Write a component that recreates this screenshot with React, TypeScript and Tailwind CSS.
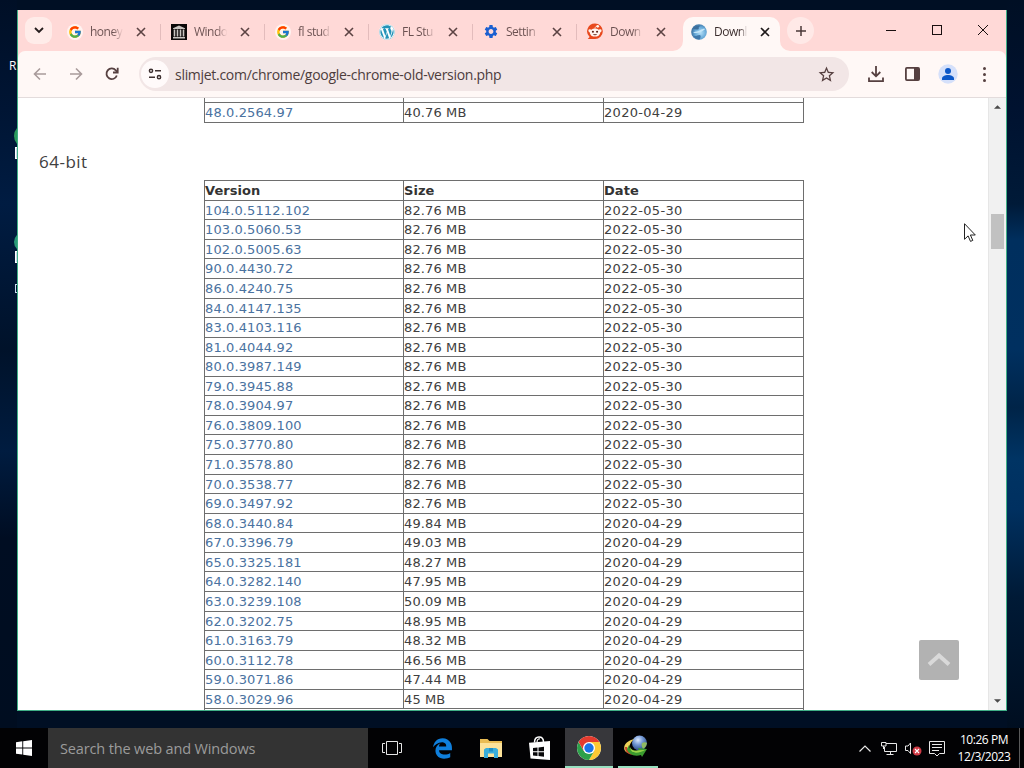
import React from 'react'
import { FcGoogle } from 'react-icons/fc'
import { FaWordpress, FaEdgeLegacy } from 'react-icons/fa6'
import { MdSettings, MdStarOutline } from 'react-icons/md'

type Release = [version: string, size: string, date: string];

const releases: Release[] = [
  ['104.0.5112.102', '82.76 MB', '2022-05-30'],
  ['103.0.5060.53', '82.76 MB', '2022-05-30'],
  ['102.0.5005.63', '82.76 MB', '2022-05-30'],
  ['90.0.4430.72', '82.76 MB', '2022-05-30'],
  ['86.0.4240.75', '82.76 MB', '2022-05-30'],
  ['84.0.4147.135', '82.76 MB', '2022-05-30'],
  ['83.0.4103.116', '82.76 MB', '2022-05-30'],
  ['81.0.4044.92', '82.76 MB', '2022-05-30'],
  ['80.0.3987.149', '82.76 MB', '2022-05-30'],
  ['79.0.3945.88', '82.76 MB', '2022-05-30'],
  ['78.0.3904.97', '82.76 MB', '2022-05-30'],
  ['76.0.3809.100', '82.76 MB', '2022-05-30'],
  ['75.0.3770.80', '82.76 MB', '2022-05-30'],
  ['71.0.3578.80', '82.76 MB', '2022-05-30'],
  ['70.0.3538.77', '82.76 MB', '2022-05-30'],
  ['69.0.3497.92', '82.76 MB', '2022-05-30'],
  ['68.0.3440.84', '49.84 MB', '2020-04-29'],
  ['67.0.3396.79', '49.03 MB', '2020-04-29'],
  ['65.0.3325.181', '48.27 MB', '2020-04-29'],
  ['64.0.3282.140', '47.95 MB', '2020-04-29'],
  ['63.0.3239.108', '50.09 MB', '2020-04-29'],
  ['62.0.3202.75', '48.95 MB', '2020-04-29'],
  ['61.0.3163.79', '48.32 MB', '2020-04-29'],
  ['60.0.3112.78', '46.56 MB', '2020-04-29'],
  ['59.0.3071.86', '47.44 MB', '2020-04-29'],
  ['58.0.3029.96', '45 MB', '2020-04-29'],
]

function ArchiveIcon() {
  return (
    <svg viewBox="0 0 16 16" className="h-4 w-4">
      <rect width="16" height="16" fill="#0c0808" />
      <path d="M2 4.2 8 1.6l6 2.6v.8H2z M2 13h12v1.6H2z" fill="#c9c4c0" />
      <path d="M3.500 5.500v7M6.500 5.500v7M9.500 5.500v7M12.500 5.500v7" stroke="#c9c4c0" strokeWidth="1.6" />
    </svg>
  )
}

function RedditIcon() {
  return (
    <svg viewBox="0 0 17 17" className="h-[17px] w-[17px]">
      <path d="M8.5 0a8.3 8.3 0 1 1 0 16.6H.8l2-2.2A8.3 8.3 0 0 1 8.5 0z" fill="#e8481c" />
      <ellipse cx="8.5" cy="9.6" rx="5.6" ry="4.3" fill="#fff4ee" />
      <circle cx="3" cy="7.7" r="1.5" fill="#fff4ee" />
      <circle cx="14" cy="7.7" r="1.5" fill="#fff4ee" />
      <circle cx="11.4" cy="3" r="1.4" fill="#fff4ee" />
      <path d="M8.5 5.4c0-1.6.8-2.4 2.4-2.4" stroke="#fff4ee" strokeWidth=".8" fill="none" />
      <circle cx="6.3" cy="8.8" r="1.1" fill="#5a1f12" />
      <circle cx="10.7" cy="8.8" r="1.1" fill="#5a1f12" />
      <path d="M6.2 11.4c1.2 1.3 3.4 1.3 4.6 0z" fill="#5a1f12" />
    </svg>
  )
}

function SlimjetIcon() {
  return (
    <svg viewBox="0 0 16 16" className="h-4 w-4">
      <defs>
        <radialGradient id="globe" cx=".6" cy=".55" r=".6">
          <stop offset="0" stopColor="#b4dff7" />
          <stop offset=".6" stopColor="#67a9d8" />
          <stop offset="1" stopColor="#386f9f" />
        </radialGradient>
      </defs>
      <circle cx="8" cy="8" r="7.8" fill="url(#globe)" />
      <path d="M1.500 4.500C4 1.500 7 1 9.500 1.600 8 3 7 4 8 5 6 6 4 5.500 1.500 4.500z" fill="#3c6f9c" />
      <path d="M2 8.500c3-1 5-1 7-2.200 2-1.300 4-1.800 5.500-1.300-2 1-3 2.500-5 3.300S4.500 9.500 2 8.500z" fill="#c4e6f9" />
      <path d="M2.500 12c3 .5 4-1 6-1s1 3 0 4.500c-2 .2-4.500-1-6-3.500z" fill="#3f78aa" />
    </svg>
  )
}

function ChromeIcon() {
  return (
    <svg viewBox="0 0 24 24" className="h-6 w-6">
      <circle cx="12" cy="12" r="12" fill="#fff" />
      <path d="M12 12V6h10.390A12 12 0 0 1 12 24l5.200-9z" fill="#fcc934" />
      <path d="M17.200 15 12 24A12 12 0 0 1 1.610 6L6.800 15 12 17z" fill="#2da04a" />
      <path d="M1.610 6 6.800 15 12 12 12 6H22.390A12 12 0 0 0 1.610 6z" fill="#e33b2e" />
      <circle cx="12" cy="12" r="6" fill="#fff" />
      <circle cx="12" cy="12" r="4.700" fill="#1a73e8" />
    </svg>
  )
}

function DownloadManagerIcon() {
  return (
    <svg viewBox="0 0 24 24" className="h-6 w-6">
      <defs>
        <radialGradient id="ball" cx=".4" cy=".3" r=".75">
          <stop offset="0" stopColor="#dbe9ff" />
          <stop offset=".45" stopColor="#6f95d2" />
          <stop offset="1" stopColor="#22407c" />
        </radialGradient>
      </defs>
      <circle cx="15.500" cy="8" r="7.500" fill="url(#ball)" />
      <path d="M18 8c2-1 4-1 5 0-.5 3-2 5-4 6-1-2-2-4-1-6z" fill="#8fba62" />
      <path d="M10 4C3 6-1 10 .5 15c2 4 7 4 11 3C7 18 4 15 5.500 10.500 6.500 8 8 6 10 4z" fill="#f0d35a" />
      <path d="M1 12c0 6 5 9 10 7-4 0-7-2-8-7z" fill="#c7452c" />
      <path d="M5 10c0 5 4 7 10 5l-1-2 9 1-5 8-1-2c-7 2-13-1-14-6z" fill="#3b9b2f" />
      <path d="M6 12c1 3 5 4.500 9 3.300l6-.3c-3 2-10 4-13 1.500-1.500-1-2-3-2-4.500z" fill="#9bd64a" />
    </svg>
  )
}

const tabs = [
  { title: 'honey', icon: <FcGoogle className="h-3.5 w-3.5" />, plate: true },
  { title: 'Windo', icon: <ArchiveIcon /> },
  { title: 'fl stud', icon: <FcGoogle className="h-3.5 w-3.5" />, plate: true },
  { title: 'FL Stu', icon: <FaWordpress className="h-4 w-4 rounded-full bg-white text-[#2493b8]" /> },
  { title: 'Settin', icon: <MdSettings className="h-[17px] w-[17px] text-[#1a5fd0]" /> },
  { title: 'Down', icon: <RedditIcon /> },
  { title: 'Downl', icon: <SlimjetIcon />, active: true },
]

function CloseGlyph({ active }: { active?: boolean }) {
  return (
    <svg viewBox="0 0 8 8" className="h-2 w-2 shrink-0 overflow-visible">
      <path d="M0 0l8 8M8 0 0 8" stroke={active ? '#1f1a1a' : '#5c4343'} strokeWidth="1.6" />
    </svg>
  )
}

function TabStrip() {
  return (
    <div className="flex h-[41px] shrink-0">
      <div className="ml-[7px] mt-[7px] flex h-[27px] w-[27px] items-center justify-center rounded-[9px] bg-[#ffece9]">
        <svg viewBox="0 0 8 5" className="h-[5px] w-2 overflow-visible">
          <path d="M0 0l4 4 4-4" fill="none" stroke="#241c1c" strokeWidth="1.8" />
        </svg>
      </div>
      <div className="ml-[7px] flex pt-[7px]">
        {tabs.map((tab, i) => (
          <div
            key={i}
            className={
              tab.active
                ? 'relative flex h-[34px] w-[97px] items-center rounded-t-[10px] bg-[#fff8f6] pb-[5px] pl-2'
                : 'relative flex h-[34px] w-[104px] items-center pb-[5px] pl-2'
            }
          >
            {tab.active && (
              <>
                <svg viewBox="0 0 10 10" className="absolute -left-[10px] bottom-0 h-[10px] w-[10px]">
                  <path d="M10 0v10H0A10 10 0 0 0 10 0z" fill="#fff8f6" />
                </svg>
                <svg viewBox="0 0 10 10" className="absolute -right-[10px] bottom-0 h-[10px] w-[10px]">
                  <path d="M0 0v10h10A10 10 0 0 1 0 0z" fill="#fff8f6" />
                </svg>
              </>
            )}
            <span
              className={
                tab.plate
                  ? 'flex h-4 w-4 shrink-0 items-center justify-center rounded-full bg-[#fff3f1]'
                  : 'flex h-4 w-4 shrink-0 items-center justify-center'
              }
            >
              {tab.icon}
            </span>
            <span
              className={
                tab.active
                  ? 'ml-[7px] w-[35px] whitespace-nowrap bg-linear-to-r from-[#3a2c2c] from-75% to-transparent to-95% bg-clip-text text-[12px] tracking-[-0.5px] text-transparent'
                  : 'ml-[7px] w-[35px] whitespace-nowrap bg-linear-to-r from-[#6a5050] from-65% to-transparent to-95% bg-clip-text text-[12px] tracking-[-0.5px] text-transparent'
              }
            >
              {tab.title}
            </span>
            <span className="ml-3 flex">
              <CloseGlyph active={tab.active} />
            </span>
            {i < 5 && <span className="ml-[15px] h-4 w-px bg-[#e3bcbc]" />}
          </div>
        ))}
      </div>
      <div className="ml-[7px] mt-[7px] flex h-[27px] w-[27px] items-center justify-center rounded-full bg-[#ffe9e7]">
        <svg viewBox="0 0 10 10" className="h-[10px] w-[10px]">
          <path d="M5 0v10M0 5h10" stroke="#4a3838" strokeWidth="1.5" />
        </svg>
      </div>
      <div className="ml-auto flex h-10 items-center text-[#1a0f0f]">
        <span className="flex w-[46px] justify-center">
          <span className="h-px w-[10px] bg-current" />
        </span>
        <span className="flex w-[46px] justify-center">
          <span className="h-[10px] w-[10px] border border-current" />
        </span>
        <span className="flex w-[46px] justify-center">
          <svg viewBox="0 0 10 10" className="h-[10px] w-[10px]">
            <path d="M0 0l10 10M10 0 0 10" stroke="currentColor" />
          </svg>
        </span>
      </div>
    </div>
  )
}

function Toolbar() {
  return (
    <div className="flex h-[47px] shrink-0 items-center rounded-t-[7px] border-b border-[#e3dcdc] bg-[#fff8f6] pl-1 text-[#564040]">
      <span className="flex w-9 justify-center">
        <svg viewBox="0 0 12 12" className="h-3 w-3 overflow-visible" fill="none" stroke="#a99b9b" strokeWidth="1.6">
          <path d="M12 6H.8M6 .5.5 6 6 11.500" />
        </svg>
      </span>
      <span className="flex w-9 justify-center">
        <svg viewBox="0 0 12 12" className="h-3 w-3 overflow-visible" fill="none" stroke="#a99b9b" strokeWidth="1.6">
          <path d="M0 6h11.200M6 .5 11.500 6 6 11.500" />
        </svg>
      </span>
      <span className="flex w-9 justify-center">
        <svg viewBox="0 0 12 12" className="h-3 w-3 overflow-visible" fill="none" stroke="currentColor" strokeWidth="1.8">
          <path d="M10.800 7.500A5.300 5.300 0 1 1 9.800 2.300L11.300 4" />
          <path d="M11.700-.3v4.800H7" />
        </svg>
      </span>
      <div className="ml-[9px] flex h-[34px] w-[710px] items-center rounded-full bg-[#f2e6e6] pl-[2px]">
        <span className="flex h-7 w-7 items-center justify-center rounded-full bg-[#fffafa]">
          <svg viewBox="0 0 12 10" className="h-[10px] w-3 overflow-visible" fill="none" stroke="#3c2f2f" strokeWidth="1.5">
            <circle cx="2" cy="1.800" r="1.600" />
            <path d="M6 1.800h6M0 8.200h6" />
            <circle cx="10" cy="8.200" r="1.600" />
          </svg>
        </span>
        <span className="ml-[6px] whitespace-nowrap text-[14px] tracking-[-0.29px] text-[#4d3d3d]">
          slimjet.com/chrome/google-chrome-old-version.php
        </span>
        <MdStarOutline className="ml-auto mr-[13px] h-[19px] w-[19px]" />
      </div>
      <div className="ml-[9px] flex items-center">
        <span className="flex w-9 justify-center">
          <svg viewBox="0 0 16 16" className="h-4 w-4" fill="none" stroke="currentColor" strokeWidth="1.8">
            <path d="M8 0v10M3.700 6 8 10.300 12.300 6M1 11.500v3.600h14v-3.600" />
          </svg>
        </span>
        <span className="flex w-9 justify-center">
          <svg viewBox="0 0 15 14" className="h-[14px] w-[15px]">
            <rect x=".9" y=".9" width="13.200" height="12.200" rx="1" fill="none" stroke="currentColor" strokeWidth="1.8" />
            <path d="M9 1h5v12H9z" fill="currentColor" />
          </svg>
        </span>
        <span className="flex w-9 justify-center">
          <svg viewBox="0 0 20 20" className="h-5 w-5">
            <circle cx="10" cy="10" r="9.700" fill="#d5e0fa" />
            <circle cx="10" cy="7" r="3" fill="#0b57c8" />
            <path d="M4 16v-1.500c0-2.300 3-3.500 6-3.500s6 1.200 6 3.500V16z" fill="#0b57c8" />
          </svg>
        </span>
        <span className="flex w-9 flex-col items-center gap-[3px]">
          <span className="h-[3px] w-[3px] rounded-full bg-current" />
          <span className="h-[3px] w-[3px] rounded-full bg-current" />
          <span className="h-[3px] w-[3px] rounded-full bg-current" />
        </span>
      </div>
    </div>
  )
}

function ReleaseRow({ release }: { release: Release }) {
  return (
    <div className="grid h-[19.57px] shrink-0 grid-cols-[199px_200px_199px] divide-x divide-[#6e6e6e] border-t border-[#6e6e6e]">
      <span className="text-[#4a72a0]">{release[0]}</span>
      <span>{release[1]}</span>
      <span className="tracking-[0.3px]">{release[2]}</span>
    </div>
  )
}

function Page() {
  return (
    <div className="flex min-h-0 grow bg-white">
      <div className="relative flex w-[970px] flex-col overflow-hidden font-['Verdana','DejaVu_Sans',sans-serif] text-[13px] leading-[19px] tracking-[0.12px] text-[#404040]">
        <div className="ml-[186px] flex h-[25px] w-[600px] shrink-0 flex-col border-x border-b border-[#6e6e6e]">
          <div className="grid h-1 shrink-0 grid-cols-[199px_200px_199px] divide-x divide-[#6e6e6e]">
            <span />
            <span />
            <span />
          </div>
          <ReleaseRow release={['48.0.2564.97', '40.76 MB', '2020-04-29']} />
        </div>
        <h2 className="ml-[21px] mt-[27px] h-[30px] shrink-0 font-['Open_Sans',sans-serif] text-[17px] leading-[24px] tracking-[0.5px]">
          64-bit
        </h2>
        <div className="ml-[186px] flex w-[600px] shrink-0 flex-col border-x border-[#6e6e6e]">
          <div className="grid h-[19.7px] shrink-0 grid-cols-[199px_200px_199px] divide-x divide-[#6e6e6e] border-t border-[#6e6e6e] font-bold tracking-[0.05px] text-[#333]">
            <span>Version</span>
            <span>Size</span>
            <span>Date</span>
          </div>
          {releases.map((release) => (
            <ReleaseRow key={release[0]} release={release} />
          ))}
          <div className="h-2 border-t border-[#6e6e6e]" />
        </div>
        <div className="absolute left-[901px] top-[542px] flex h-10 w-10 items-center justify-center rounded-[2px] bg-[#b2b2b2]">
          <svg viewBox="0 0 24 14" className="h-[14px] w-6">
            <path d="M2 11.500 12 2.500l10 9" fill="none" stroke="#d9d9d9" strokeWidth="4" />
          </svg>
        </div>
      </div>
      <div className="flex w-[18px] flex-col items-center border-l border-[#e6e6e6] bg-[#f1f1f1] py-[7px]">
        <svg viewBox="0 0 8 4" className="h-1 w-[7px] shrink-0">
          <path d="M0 4l4-4 4 4z" fill="#4a4a4a" />
        </svg>
        <div className="mt-[105px] h-[35px] w-[13px] bg-[#c1c1c1]" />
        <svg viewBox="0 0 8 4" className="mt-auto h-1 w-[7px] shrink-0">
          <path d="M0 0l4 4 4-4z" fill="#4a4a4a" />
        </svg>
      </div>
    </div>
  )
}

function Taskbar() {
  return (
    <div className="flex h-10 bg-[#020204] text-white">
      <div className="flex w-12 items-center justify-center">
        <svg viewBox="0 0 16 16" className="h-4 w-4" fill="#fff">
          <path d="M0 2.200 6.300 1.300v6.200H0zM7.200 1.200 16 0v7.500H7.200zM0 8.400h6.300v6.200L0 13.800zM7.200 8.400H16V16l-8.800-1.200z" />
        </svg>
      </div>
      <div className="flex w-80 items-center bg-[#333] pl-3 pt-px text-[14.5px] tracking-[-0.14px] text-[#9b9b9b]">
        Search the web and Windows
      </div>
      <div className="flex w-12 items-center justify-center">
        <svg viewBox="0 0 20 14" className="h-[14px] w-5" fill="none" stroke="#e6e6e6">
          <path d="M4.500.5h11v13h-11zM3 2.500H.5v9H3M17 2.500h2.500v9H17" />
        </svg>
      </div>
      <div className="ml-0.5 flex gap-px">
        <div className="flex w-12 items-center justify-center">
          <FaEdgeLegacy className="h-[21px] w-[21px] text-[#0f7fdc]" />
        </div>
        <div className="flex w-12 items-center justify-center">
          <svg viewBox="0 0 22 20" className="h-5 w-[22px]">
            <path d="M0 1h7.500l2 2H22v16H0z" fill="#e9bc54" />
            <path d="M0 5h22v14H0z" fill="#fce29a" />
            <path d="M4 20v-8.500L6 10h10l2 1.500V20h-4v-4.500H8V20z" fill="#3aaedb" />
            <path d="M9 10h4v3.500H9z" fill="#1d8fc6" />
          </svg>
        </div>
        <div className="flex w-12 items-center justify-center pr-0.5">
          <svg viewBox="0 0 21 24" className="h-6 w-[21px]">
            <path d="M5.500 6.500C5.500 2 8 1 10 1s4.500 1 4.500 5" fill="none" stroke="#fff" strokeWidth="1.500" />
            <path d="M8 6.500C8 3.500 9.500 2.500 11 3" fill="none" stroke="#fff" strokeWidth="1.200" />
            <path d="M0 6.800 21 5v19L1.500 22.500z" fill="#fff" />
            <path d="M4 12l4.500-.5v3.800H4zM9.500 11.400l5.500-.6v4.500H9.500zM4 16.300h4.500V20L4 19.600zM9.500 16.300H15v4.400l-5.500-.6z" fill="#08080a" />
          </svg>
        </div>
        <div className="flex w-12 flex-col border-b-2 border-[#98e0c0] bg-[#37373b]">
          <span className="flex grow items-center justify-center pt-0.5">
            <ChromeIcon />
          </span>
        </div>
        <div className="flex w-12 flex-col items-center pr-1">
          <span className="flex grow items-center">
            <DownloadManagerIcon />
          </span>
          <span className="ml-1 h-0.5 w-10 bg-[#98e0c0]" />
        </div>
      </div>
      <div className="ml-auto flex items-center">
        <svg viewBox="0 0 12 7" className="h-[7px] w-3" fill="none" stroke="#e8e8e8" strokeWidth="1.200">
          <path d="M.5 6.500 6 1l5.500 5.500" />
        </svg>
        <svg viewBox="0 0 16 14" className="ml-[10px] mt-px h-[14px] w-4" fill="none" stroke="#e8e8e8">
          <path d="M5 1.500h10.500v8H3.500V5M9.500 9.500v3M5.500 12.500h7M.5.500H5v3.500H.5zM2.500 4v3" />
        </svg>
        <svg viewBox="0 0 17 14" className="ml-2 mt-0.5 h-[14px] w-[17px]">
          <path d="M5.500 1v10.500L3 8.500H.5V4H3z" fill="none" stroke="#e8e8e8" />
          <circle cx="12" cy="9" r="4.500" fill="#cf3a45" />
          <path d="M10 7l4 4M14 7l-4 4" stroke="#fff" strokeWidth="1.100" />
        </svg>
        <svg viewBox="0 0 16 16" className="ml-[7px] mt-px h-4 w-4" fill="none" stroke="#e8e8e8">
          <path d="M.5.500h15v12h-5L8 15l-2.500-2.500h-5zM3 3.500h10M3 6.500h10M3 9.500h7" />
        </svg>
        <div className="ml-[9px] w-[60px] text-center text-[12px] leading-[17px] tracking-[-0.45px] whitespace-nowrap">
          <div>10:26 PM</div>
          <div>12/3/2023</div>
        </div>
        <div className="ml-[5px] mr-1 h-10 w-px bg-[#5a5a5a]" />
      </div>
    </div>
  )
}

export default function App() {
  return (
    <div className="relative flex h-[768px] w-[1024px] flex-col overflow-hidden bg-[#000f24] font-['Segoe_UI','Open_Sans',sans-serif]">
      <div className="flex h-[728px]">
        <div className="relative w-[17px] shrink-0 overflow-hidden bg-[linear-gradient(to_bottom,#000f26_0%,#001534_15%,#001c42_28%,#00122a_48%,#001c40_62%,#000d22_74%,#000d20_100%)]">
          {/* desktop shortcuts mostly covered by the window */}
          <span className="absolute left-[9px] top-[57px] text-[12px] text-white">R</span>
          <span className="absolute left-[14px] top-[124px] h-6 w-6 rounded-full bg-[#2b9a5c]" />
          <span className="absolute left-[15px] top-[147px] h-3 w-3 border border-white bg-[#c8dcec]" />
          <span className="absolute left-[14px] top-[232px] h-5 w-5 rounded-full bg-[#2b9a78]" />
          <span className="absolute left-[15px] top-[251px] h-3 w-3 border border-white bg-[#c8dcec]" />
          <span className="absolute left-[15px] top-[284px] h-[9px] w-2 border border-[#c8dcec]" />
        </div>

        <div className="mt-[10px] flex h-[701px] w-[990px] shrink-0 flex-col overflow-hidden border border-t-0 border-[#3fae86] bg-[#ffd9d7]">
          <TabStrip />
          <Toolbar />
          <Page />
        </div>

        <div className="w-[17px] shrink-0 bg-[linear-gradient(to_bottom,#000f24_0%,#001230_15%,#001a38_28%,#002f5e_33%,#003060_48%,#002448_56%,#003464_63%,#003060_70%,#001a36_82%,#000e20_100%)]" />
      </div>
      <Taskbar />
      <svg viewBox="0 0 12 19" className="absolute left-[964px] top-[223px] h-[19px] w-3">
        <path d="M.5.700v15.600l3.600-3.400 2.400 5.500 2.300-1-2.400-5.400h4.900z" fill="#fff" stroke="#222" />
      </svg>
    </div>
  )
}
